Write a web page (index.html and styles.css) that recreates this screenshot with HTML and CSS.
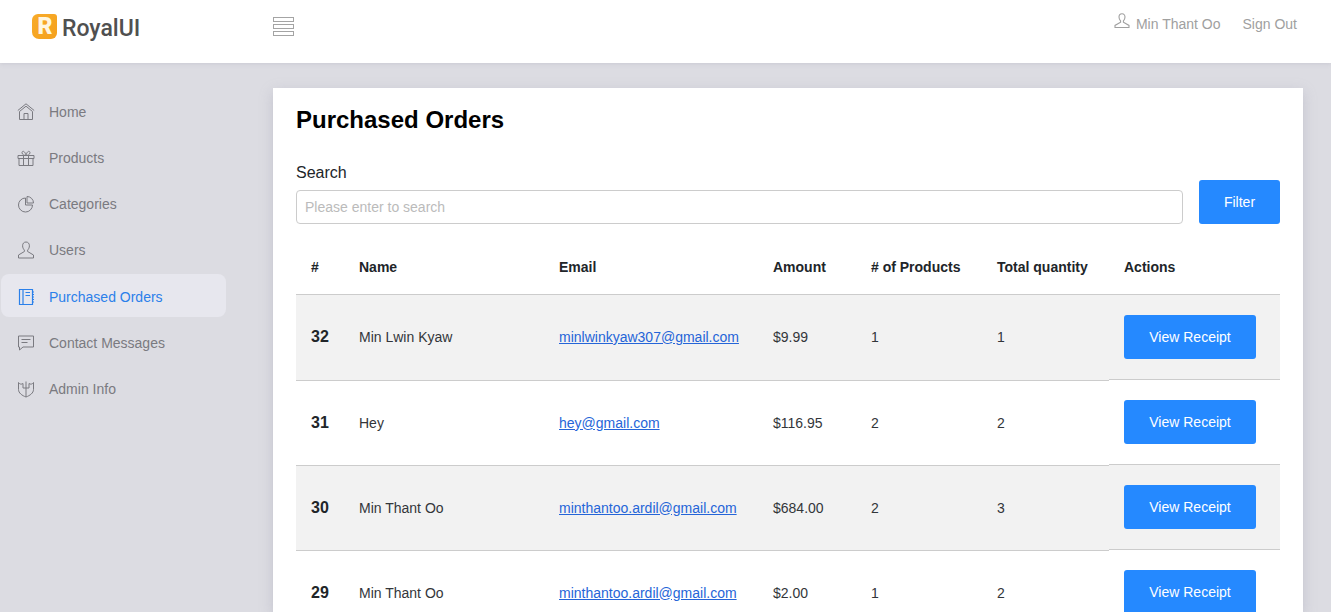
FILE: index.html
```html
<!DOCTYPE html>
<html lang="en">
<head>
<meta charset="utf-8">
<title>Purchased Orders</title>
<link rel="stylesheet" href="styles.css">
</head>
<body>
<div class="app">
  <header class="topbar">
    <div class="brand">
      <span class="brand-mark">R</span>
      <span class="brand-name">RoyalUI</span>
    </div>
    <button class="menu-toggle" aria-label="Toggle menu"><span></span><span></span><span></span></button>
    <nav class="top-links">
      <a class="top-user"><svg class="user-icon" viewBox="0 0 16 16"><path d="M8 .800C6 .800 5 2.200 5 4.100 5 5.800 5.700 7.100 6.600 8V9.300L1 12.400V14.500H15V12.400L9.400 9.300V8C10.300 7.100 11 5.800 11 4.100 11 2.200 10 .800 8 .800Z" fill="none" stroke="currentColor" stroke-width="1.100"/></svg>Min Thant Oo</a>
      <a>Sign Out</a>
    </nav>
  </header>
  <div class="body-row">
    <aside class="sidebar">
      <a class="nav-item"><svg viewBox="0 0 18 18"><path d="M.800 7.500 9 .800 17.200 7.500M2.500 8.500 9 3.200 15.500 8.500M2.500 8.500V16.500H15.500V8.500M7 16.500V10.500H11V16.500" fill="none" stroke="currentColor"/></svg>Home</a>
      <a class="nav-item"><svg viewBox="0 0 18 18"><path d="M1 6.500H17V9.500H1ZM2 9.500V16.500H16V9.500M6.500 6.500V16.500M11.500 6.500V16.500M9 6.500C7.500 6.500 5 5.700 5 3.700 5 1.500 8 1.500 9 6.500 10 1.500 13 1.500 13 3.700 13 5.700 10.500 6.500 9 6.500Z" fill="none" stroke="currentColor"/></svg>Products</a>
      <a class="nav-item"><svg viewBox="0 0 18 18"><path d="M8.500 3A7 7 0 1 0 15.500 10H8.500ZM10 1.500A6.500 6.500 0 0 1 16.500 8H10Z" fill="none" stroke="currentColor"/></svg>Categories</a>
      <a class="nav-item"><svg viewBox="0 0 18 18"><path d="M9 1C6.800 1 5.600 2.600 5.600 4.800 5.600 6.600 6.400 8.100 7.400 9.100V10.500L1.500 14V17H16.500V14L10.600 10.500V9.100C11.600 8.100 12.400 6.600 12.400 4.800 12.400 2.600 11.200 1 9 1Z" fill="none" stroke="currentColor"/></svg>Users</a>
      <a class="nav-item active"><svg viewBox="0 0 18 18"><path d="M2.500 1.500H15.500V16.500H2.500ZM6 1.500V16.500M8.500 4.500H13M8.500 7.500H13M15.500 4H17M15.500 6.500H17M15.500 9H17M15.500 11.500H17M15.500 14H17" fill="none" stroke="currentColor" stroke-width="1.200"/></svg>Purchased Orders</a>
      <a class="nav-item"><svg viewBox="0 0 18 18"><path d="M1.500 2H16.500V13H6L2.500 16V13H1.500ZM4.500 5.500H13.500M4.500 8.500H10.500" fill="none" stroke="currentColor"/></svg>Contact Messages</a>
      <a class="nav-item"><svg viewBox="0 0 18 18"><path d="M1.500 2.500C3 4.500 4.500 4.500 6 3.500V8H12V3.500C13.500 4.500 15 4.500 16.500 2.500V9.500C16.500 13 13 15.500 9 17 5 15.500 1.500 13 1.500 9.500ZM9 1.500V17" fill="none" stroke="currentColor"/></svg>Admin Info</a>
    </aside>
    <main class="card">
      <h1 class="title">Purchased Orders</h1>
      <form class="search-row">
        <label class="search-field">
          <span class="search-label">Search</span>
          <input class="search-input" type="text" placeholder="Please enter to search">
        </label>
        <button class="btn btn-filter" type="button">Filter</button>
      </form>
      <table class="orders">
        <colgroup>
          <col class="c-id"><col class="c-name"><col class="c-email"><col class="c-amount"><col class="c-products"><col class="c-qty"><col class="c-actions">
        </colgroup>
        <thead>
          <tr><th>#</th><th>Name</th><th>Email</th><th>Amount</th><th># of Products</th><th>Total quantity</th><th>Actions</th></tr>
        </thead>
        <tbody>
          <tr><td class="id">32</td><td>Min Lwin Kyaw</td><td><a href="#">minlwinkyaw307@gmail.com</a></td><td>$9.99</td><td>1</td><td>1</td><td><button class="btn btn-view" type="button">View Receipt</button></td></tr>
          <tr><td class="id">31</td><td>Hey</td><td><a href="#">hey@gmail.com</a></td><td>$116.95</td><td>2</td><td>2</td><td><button class="btn btn-view" type="button">View Receipt</button></td></tr>
          <tr><td class="id">30</td><td>Min Thant Oo</td><td><a href="#">minthantoo.ardil@gmail.com</a></td><td>$684.00</td><td>2</td><td>3</td><td><button class="btn btn-view" type="button">View Receipt</button></td></tr>
          <tr><td class="id">29</td><td>Min Thant Oo</td><td><a href="#">minthantoo.ardil@gmail.com</a></td><td>$2.00</td><td>1</td><td>2</td><td><button class="btn btn-view" type="button">View Receipt</button></td></tr>
        </tbody>
      </table>
    </main>
  </div>
</div>
</body>
</html>
```
FILE: styles.css
```css
* { box-sizing: border-box; }
html, body { margin: 0; height: 100%; }
body { font-family: "Liberation Sans", Arial, sans-serif; background: #dcdce2; color: #212529; overflow: hidden; }
.app { height: 612px; overflow: hidden; display: flex; flex-direction: column; }

.topbar { height: 63px; flex: none; background: #fff; display: flex; align-items: flex-start; box-shadow: 0 1px 4px rgba(150,150,170,.25); position: relative; z-index: 1; }
.brand { width: 273px; padding: 14px 0 0 32px; display: flex; align-items: flex-start; gap: 5px; flex: none; }
.brand-mark { width: 25px; height: 25px; flex: none; display: flex; align-items: center; justify-content: center; padding-left: 1px; background: linear-gradient(135deg, #f8ab2a, #f5a11c); border-radius: 6px 3px 6px 7px; color: #fff6e0; font: 900 23px/25px Roboto, sans-serif; }
.brand-name { font-family: Roboto, sans-serif; font-size: 23px; font-weight: 500; line-height: 30px; color: #505050; }
.menu-toggle { border: 0; background: none; padding: 0; margin-top: 17px; width: 21px; display: flex; flex-direction: column; gap: 2px; flex: none; }
.menu-toggle span { display: block; height: 5px; border: 1px solid #a4a4a4; }
.top-links { margin-left: auto; padding: 14px 34px 0 0; display: flex; gap: 22px; font-size: 14px; color: #a0a0a0; line-height: 20px; }
.top-user { display: flex; align-items: flex-start; gap: 6px; }
.user-icon { width: 16px; height: 16px; margin-top: -1px; }

.body-row { flex: 1; display: flex; min-height: 0; }
.sidebar { width: 273px; flex: none; padding: 27px 47px 0 1px; display: flex; flex-direction: column; gap: 3px; }
.nav-item { height: 43px; flex: none; display: flex; align-items: center; gap: 14px; padding-left: 16px; font-size: 14px; color: #7a7a80; border-radius: 8px; }
.nav-item svg { width: 18px; height: 18px; flex: none; }
.nav-item.active { background: #e7e7ee; color: #2b80ea; padding-top: 2px; margin-bottom: 1px; }

.card { width: 1030px; margin-top: 25px; background: #fff; padding: 17px 23px 0; box-shadow: 0 4px 12px rgba(150,150,170,.35); }
.title { margin: 0; font-size: 24px; font-weight: 700; line-height: 30px; color: #000; }
.search-row { display: flex; align-items: flex-end; gap: 16px; margin-top: 28px; }
.search-field { flex: 1; display: block; }
.search-label { display: block; font-size: 16px; line-height: 20px; color: #212529; margin-bottom: 7px; }
.search-input { display: block; width: 100%; height: 34px; border: 1px solid #ccc; border-radius: 4px; padding: 0 8px; font: 14px "Liberation Sans", Arial, sans-serif; }
.search-input::placeholder { color: #bbb; }
.btn { border: 0; border-radius: 3px; background: #2589ff; color: #fff; font: 14px "Liberation Sans", Arial, sans-serif; }
.btn-filter { width: 81px; height: 44px; }
.btn-view { display: block; width: 132px; height: 44px; }

.orders { width: 984px; table-layout: fixed; border-collapse: separate; border-spacing: 0; margin-top: 17px; font-size: 14px; }
.c-id { width: 48px; } .c-name { width: 200px; } .c-email { width: 214px; } .c-amount { width: 98px; }
.c-products { width: 126px; } .c-qty { width: 127px; } .c-actions { width: 171px; }
.orders th { height: 54px; text-align: left; font-weight: 700; padding: 0 15px 2px; border-bottom: 1px solid #ccc; color: #212529; }
.orders td { padding: 19px 15px 21px; color: #33363a; }
.orders td:last-child { padding: 20px 15px; border-bottom: 1px solid #ccc; }
.orders tbody tr + tr td:not(:last-child) { padding: 20px 15px; box-shadow: inset 0 1px 0 #ccc; }
.orders td.id { font-size: 16px; font-weight: 700; color: #212529; }
.orders tbody tr:nth-child(odd) td { background: #f2f2f2; }
.orders a { color: #2565d8; }
```
